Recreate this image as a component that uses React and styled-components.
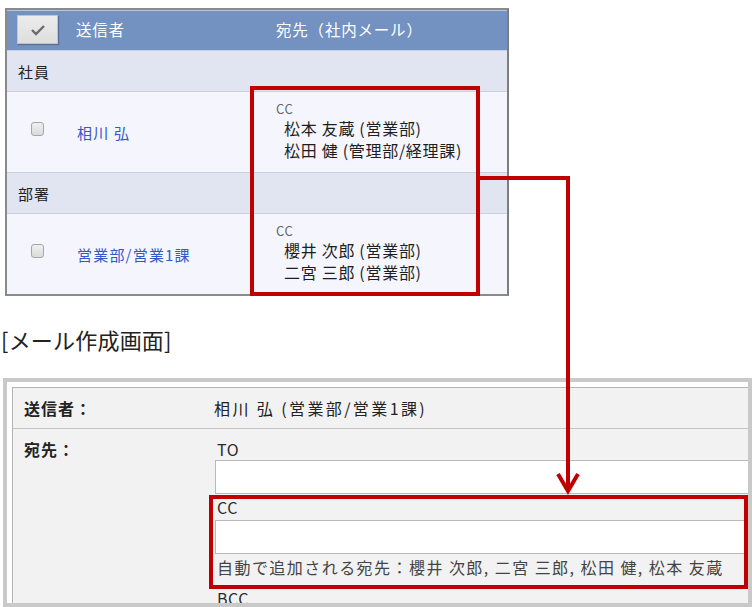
import React from "react";
import styled, { createGlobalStyle } from "styled-components";

const GlobalStyle = createGlobalStyle`
  html, body { margin: 0; padding: 0; background: #ffffff; }
  body { font-family: "Noto Sans CJK JP", "Noto Sans", sans-serif; color: #222; }
  * { box-sizing: border-box; }
`;

const Page = styled.div`
  position: relative;
  width: 752px;
  height: 607px;
  overflow: hidden;
  background: #fff;
  padding-top: 8px;
`;

/* ---------- top list panel ---------- */
const ListPanel = styled.div`
  margin-left: 5px;
  width: 504px;
  border: 2px solid #8a8a8a;
  border-right-color: #7d7d7d;
  background: #f5f6fd;
`;

const Grid = styled.div`
  display: grid;
  grid-template-columns: 55px 200px 1fr;
  align-items: center;
`;

const HeaderRow = styled(Grid)`
  height: 40px;
  background: #7391c1;
  box-shadow: inset 0 1px 0 #b9c6de;
  color: #fff;
  font-size: 15.5px;
  letter-spacing: 0.8px;
`;

const HeaderCell = styled.div`
  padding-left: ${(p) => p.$pad}px;
  padding-bottom: 2px;
`;

const CheckAllButton = styled.div`
  margin-left: 10px;
  width: 41px;
  height: 29px;
  margin-top: -1px;
  background: linear-gradient(#ececec, #dedede);
  border: 1px solid #c4c4c4;
  box-shadow: 1px 1px 1px rgba(60, 70, 100, 0.45);
  display: flex;
  align-items: center;
  justify-content: center;
`;

const GroupRow = styled.div`
  height: 41px;
  border-top: 1px solid #ccd0de;
  background: #e1e5f1;
  display: flex;
  align-items: center;
  padding-left: 11px;
  font-size: 15px;
  letter-spacing: 1px;
  color: #222;
`;

const DataRow = styled(Grid)`
  height: 81px;
  border-top: 1px solid #ccd0de;
  background: #f5f6fd;
`;

const CheckCell = styled.div`
  padding-left: 24px;
  display: flex;
  margin-bottom: 7px;
`;

const Checkbox = styled.span`
  display: block;
  width: 13px;
  height: 14px;
  border: 1px solid #a6a6a6;
  border-radius: 3px;
  background: linear-gradient(#f0f0f0, #dadada);
`;

const NameCell = styled.div`
  padding-left: 15px;
  color: #3458c9;
  font-size: 15px;
  letter-spacing: 1.2px;
`;

const RecipientCell = styled.div`
  padding-left: 14px;
  display: flex;
  flex-direction: column;
  margin-bottom: 2px;
`;

const CcLabel = styled.div`
  font-size: 13px;
  line-height: 16px;
  color: #666;
  letter-spacing: 0.5px;
`;

const Recipient = styled.div`
  padding-left: 8px;
  font-size: 16px;
  line-height: 22px;
  letter-spacing: 0.7px;
  color: #1e1e1e;
`;

/* ---------- caption ---------- */
const Caption = styled.div`
  margin-top: 30px;
  margin-left: 1px;
  font-size: 22px;
  line-height: 26px;
  letter-spacing: 0.2px;
  color: #222;
`;

/* ---------- compose form ---------- */
const FormFrame = styled.div`
  margin-top: 26px;
  margin-left: 3px;
  width: 749px;
  height: 229px;
  border: 4px solid #c9c9c9;
  padding: 5px 0 0 5px;
  overflow: hidden;
  background: #fff;
`;

const FormTable = styled.div`
  border-top: 1px solid #b4b4b4;
  border-left: 1px solid #b4b4b4;
  background: #f2f2f2;
`;

const FormRow = styled.div`
  display: grid;
  grid-template-columns: 201px 1fr;
  border-bottom: 1px solid #c4c4c4;
  min-height: ${(p) => p.$h || 0}px;
  align-items: ${(p) => (p.$top ? "start" : "center")};
`;

const FormLabel = styled.div`
  padding-left: 11px;
  font-size: 16px;
  font-weight: bold;
  letter-spacing: 1px;
  color: #222;
  padding-top: ${(p) => p.$pt || 0}px;
`;

const FormValue = styled.div`
  font-size: 16px;
  letter-spacing: 2.4px;
  color: #222;
  padding-top: ${(p) => p.$pt || 0}px;
`;

const FieldLabel = styled.div`
  padding-left: 3px;
  font-size: 16px;
  line-height: ${(p) => p.$lh}px;
  color: #2a2a2a;
  letter-spacing: 0.5px;
`;

const TextBox = styled.div`
  height: 34px;
  margin-left: 1px;
  background: #fff;
  border: 1px solid #b9b9b9;
  border-right: none;
`;

const Hint = styled.div`
  padding-left: 3px;
  font-size: 16px;
  line-height: 27px;
  letter-spacing: 1.45px;
  color: #444;
  margin-bottom: 5px;
`;

/* ---------- annotations ---------- */
const Highlight = styled.div`
  position: absolute;
  border: 4px solid #c00000;
  pointer-events: none;
`;

const Connector = styled.svg`
  position: absolute;
  left: 0;
  top: 0;
  pointer-events: none;
`;

export default function App() {
  return (
    <>
      <GlobalStyle />
      <Page>
        <ListPanel>
          <HeaderRow>
            <div>
              <CheckAllButton>
                <svg width="16" height="12" viewBox="0 0 16 12">
                  <polyline points="2,6 6,10 14,2" fill="none" stroke="#6b6b6b" strokeWidth="2.4" />
                </svg>
              </CheckAllButton>
            </div>
            <HeaderCell $pad={14}>送信者</HeaderCell>
            <HeaderCell $pad={14}>宛先（社内メール）</HeaderCell>
          </HeaderRow>

          <GroupRow>社員</GroupRow>
          <DataRow>
            <CheckCell><Checkbox /></CheckCell>
            <NameCell>相川 弘</NameCell>
            <RecipientCell>
              <CcLabel>CC</CcLabel>
              <Recipient>松本 友蔵 (営業部)</Recipient>
              <Recipient>松田 健 (管理部/経理課)</Recipient>
            </RecipientCell>
          </DataRow>

          <GroupRow>部署</GroupRow>
          <DataRow>
            <CheckCell><Checkbox /></CheckCell>
            <NameCell>営業部/営業1課</NameCell>
            <RecipientCell>
              <CcLabel>CC</CcLabel>
              <Recipient>櫻井 次郎 (営業部)</Recipient>
              <Recipient>二宮 三郎 (営業部)</Recipient>
            </RecipientCell>
          </DataRow>
        </ListPanel>

        <Caption>[メール作成画面]</Caption>

        <FormFrame>
          <FormTable>
            <FormRow $h={41}>
              <FormLabel>送信者：</FormLabel>
              <FormValue>相川 弘 (営業部/営業1課)</FormValue>
            </FormRow>
            <FormRow $top>
              <FormLabel $pt={8}>宛先：</FormLabel>
              <FormValue $pt={9}>
                <FieldLabel $lh={22}>TO</FieldLabel>
                <TextBox />
                <FieldLabel $lh={26}>CC</FieldLabel>
                <TextBox />
                <Hint>自動で追加される宛先：櫻井 次郎, 二宮 三郎, 松田 健, 松本 友蔵</Hint>
                <FieldLabel $lh={24}>BCC</FieldLabel>
              </FormValue>
            </FormRow>
          </FormTable>
        </FormFrame>

        <Highlight style={{ left: 250, top: 86, width: 230, height: 210 }} />
        <Highlight style={{ left: 209, top: 495, width: 539, height: 94 }} />

        <Connector width="752" height="607" viewBox="0 0 752 607">
          <polyline points="480,178 568,178 568,490" fill="none" stroke="#c00000" strokeWidth="4" />
          <polyline points="558,474 568,491 578,474" fill="none" stroke="#c00000" strokeWidth="4" />
        </Connector>
      </Page>
    </>
  );
}
